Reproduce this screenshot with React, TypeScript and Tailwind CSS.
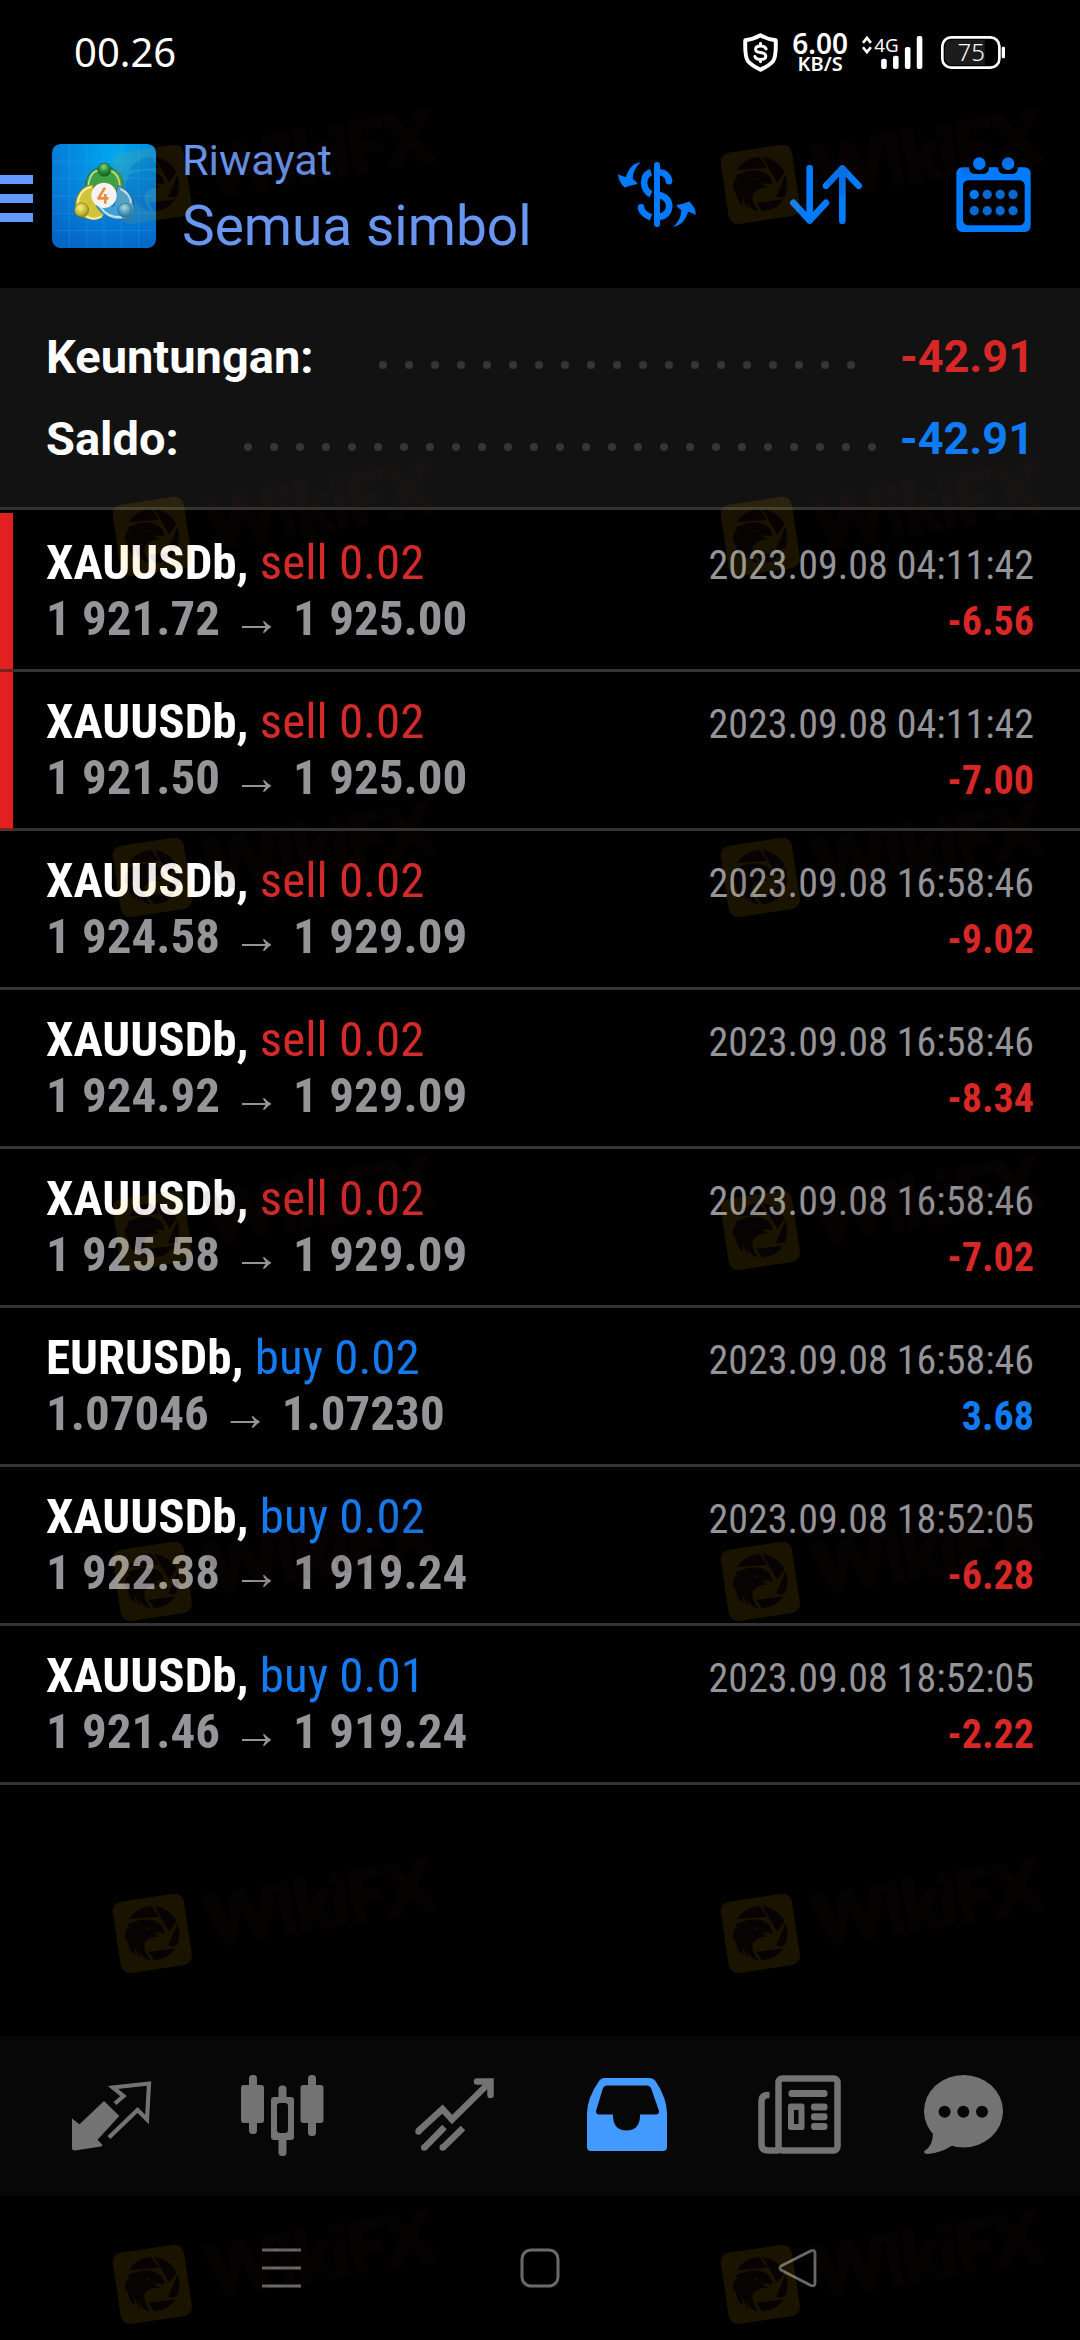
import type { ReactNode } from "react";

type Side = "sell" | "buy";

interface Deal {
  symbol: string;
  side: Side;
  volume: string;
  open: string;
  close: string;
  time: string;
  profit: string;
  marked?: boolean;
}

const deals: Deal[] = [
  { symbol: "XAUUSDb", side: "sell", volume: "0.02", open: "1 921.72", close: "1 925.00", time: "2023.09.08 04:11:42", profit: "-6.56", marked: true },
  { symbol: "XAUUSDb", side: "sell", volume: "0.02", open: "1 921.50", close: "1 925.00", time: "2023.09.08 04:11:42", profit: "-7.00", marked: true },
  { symbol: "XAUUSDb", side: "sell", volume: "0.02", open: "1 924.58", close: "1 929.09", time: "2023.09.08 16:58:46", profit: "-9.02" },
  { symbol: "XAUUSDb", side: "sell", volume: "0.02", open: "1 924.92", close: "1 929.09", time: "2023.09.08 16:58:46", profit: "-8.34" },
  { symbol: "XAUUSDb", side: "sell", volume: "0.02", open: "1 925.58", close: "1 929.09", time: "2023.09.08 16:58:46", profit: "-7.02" },
  { symbol: "EURUSDb", side: "buy", volume: "0.02", open: "1.07046", close: "1.07230", time: "2023.09.08 16:58:46", profit: "3.68" },
  { symbol: "XAUUSDb", side: "buy", volume: "0.02", open: "1 922.38", close: "1 919.24", time: "2023.09.08 18:52:05", profit: "-6.28" },
  { symbol: "XAUUSDb", side: "buy", volume: "0.01", open: "1 921.46", close: "1 919.24", time: "2023.09.08 18:52:05", profit: "-2.22" },
];

function StatusBar() {
  return (
    <div className="flex h-[104px] items-center justify-between pl-[74px] pr-[75px] text-white">
      <time className="font-['Noto_Sans','Open_Sans',sans-serif] text-[40px]">00.26</time>
      <div className="flex items-center gap-[14px] font-['Noto_Sans','Open_Sans',sans-serif]">
        <svg viewBox="424 38 106 118" className="h-[39px] w-[35px]" fill="none" stroke="currentColor" strokeLinejoin="round" strokeLinecap="round" aria-label="Proteksi pembayaran">
          <path strokeWidth="12" d="M477 45 Q500 58 523 60 Q525 108 515 123 Q506 135 477 149 Q448 135 439 123 Q429 108 431 60 Q454 58 477 45Z" />
          <path strokeWidth="9" d="M494 86Q490 77 477 77Q462 77 462 87Q462 95 477 97Q493 99 493 108Q493 118 477 118Q463 118 460 109M477 70V76M477 119V125" />
        </svg>
        <div className="flex flex-col items-center pt-1 font-semibold">
          <span className="text-[28px] leading-5">6.00</span>
          <span className="text-[20px] leading-[22px]">KB/S</span>
        </div>
        <svg viewBox="785 48 183 100" className="h-[33px] w-[61px] overflow-visible" fill="currentColor" aria-label="Sinyal 4G">
          <path d="M787 69L799 54L811 69M787 82L799 97L811 82" fill="none" stroke="currentColor" strokeWidth="8" />
          <text x="821" y="97" fontSize="57" fontFamily="Noto Sans, sans-serif">4G</text>
          <rect x="842" y="117" width="17" height="31" rx="6" />
          <rect x="878" y="108" width="17" height="40" rx="6" />
          <rect x="914" y="81" width="17" height="67" rx="6" />
          <rect x="950" y="48" width="17" height="100" rx="6" />
        </svg>
        <svg viewBox="1023 48 193 99" className="ml-1 h-[33px] w-16 overflow-visible" fill="currentColor" aria-label="Baterai 75 persen">
          <rect x="1027" y="52" width="172" height="91" rx="27" fill="none" stroke="currentColor" strokeWidth="8" />
          <path d="M1058 60H1155V135H1058Q1035 135 1035 112V83Q1035 60 1058 60Z" fill="#1c1c1c" />
          <text x="1073" y="123" fontSize="72" fontWeight="300" fontFamily="Noto Sans, sans-serif">75</text>
          <rect x="1206" y="80" width="10" height="35" rx="4" />
        </svg>
      </div>
    </div>
  );
}

function AppLogo() {
  return (
    <svg viewBox="21 28 312 312" className="size-[104px]" aria-label="MetaTrader 4">
      <defs>
        <radialGradient id="sky" cx="0.6" cy="0.1" r="1">
          <stop offset="0" stopColor="#00a8ee" />
          <stop offset="0.5" stopColor="#0583dc" />
          <stop offset="1" stopColor="#0464c4" />
        </radialGradient>
        <radialGradient id="green" cx="0.45" cy="0.3" r="0.7">
          <stop offset="0" stopColor="#8fd08a" />
          <stop offset="0.5" stopColor="#2c8f35" />
          <stop offset="1" stopColor="#12601c" />
        </radialGradient>
        <radialGradient id="yellow" cx="0.4" cy="0.35" r="0.7">
          <stop offset="0" stopColor="#f4ee90" />
          <stop offset="0.6" stopColor="#c9bb2e" />
          <stop offset="1" stopColor="#8b851f" />
        </radialGradient>
        <radialGradient id="blue" cx="0.45" cy="0.3" r="0.7">
          <stop offset="0" stopColor="#a4dcf8" />
          <stop offset="0.6" stopColor="#3b96cf" />
          <stop offset="1" stopColor="#156aa5" />
        </radialGradient>
      </defs>
      <rect x="21" y="28" width="312" height="312" rx="26" fill="url(#sky)" />
      <path d="M73 28V340M125 28V340M177 28V340M229 28V340M281 28V340M21 80H333M21 132H333M21 184H333M21 236H333M21 288H333" stroke="#5cc2f5" strokeOpacity="0.28" strokeWidth="2" />
      <path d="M126 190C112 140 130 98 178 97C228 98 246 142 226 192L196 190L160 188Z" fill="#3e9f45" stroke="#246c3a" strokeWidth="3" />
      <path d="M133 176C124 142 140 108 160 108M196 108C220 116 230 146 220 176" fill="none" stroke="#b5e3a5" strokeWidth="5" strokeLinecap="round" />
      <path d="M145 150C112 150 90 182 91 218C98 246 128 262 168 250L192 226L150 205Z" fill="#cfc43c" stroke="#7d7d2d" strokeWidth="3" />
      <path d="M136 158C112 164 100 184 99 202M126 246C142 256 158 252 168 246" fill="none" stroke="#f5f0a5" strokeWidth="6" strokeLinecap="round" />
      <path d="M218 152C250 160 272 200 266 232C252 260 206 264 178 240C162 228 154 216 152 206L206 214Z" fill="#439fd8" stroke="#1d6ba4" strokeWidth="3" />
      <path d="M228 164C246 172 256 188 258 202M166 216C180 240 202 248 228 248" fill="none" stroke="#bfe7fa" strokeWidth="6" strokeLinecap="round" />
      <circle cx="178" cy="105" r="20" fill="url(#green)" stroke="#1d6a2e" strokeWidth="2" />
      <circle cx="110" cy="226" r="21" fill="url(#yellow)" stroke="#7f7c2c" strokeWidth="2" />
      <circle cx="240" cy="227" r="21" fill="url(#blue)" stroke="#1a659c" strokeWidth="2" />
      <circle cx="177" cy="182" r="38" fill="#f4f3f1" />
      <path d="M180 159L160 191H190M181 178V207" fill="none" stroke="#ee8d3e" strokeWidth="8" strokeLinejoin="round" />
    </svg>
  );
}

function Header() {
  return (
    <header className="flex h-[184px] items-center pr-[49px] text-[#007aff]">
      <button type="button" aria-label="Menu" className="flex w-[33px] flex-col gap-[10px] pt-1">
        <span className="h-[9px] bg-[#6699ff]" />
        <span className="h-[9px] bg-[#6699ff]" />
        <span className="h-[9px] bg-[#6699ff]" />
      </button>
      <div className="ml-[19px]">
        <AppLogo />
      </div>
      <div className="ml-[26px] font-[Roboto,sans-serif] text-[#6896f0]">
        <p className="text-[43px] leading-[60px]">Riwayat</p>
        <h1 className="text-[55px] leading-[72px]">Semua simbol</h1>
      </div>
      <div className="ml-auto flex items-center gap-[94px] pb-[3px]">
        <button type="button" aria-label="Simbol">
          <svg viewBox="54 430 234 196" className="h-[65px] w-[78px]" fill="none" stroke="currentColor" strokeWidth="20">
            <path strokeLinecap="round" strokeWidth="18" d="M171 439V617" />
            <path d="M178 461Q204 463 208 488" />
            <circle cx="207" cy="488" r="10" fill="currentColor" stroke="none" />
            <path d="M153 461Q133 467 132 492Q133 517 153 527" />
            <path d="M178 529Q208 538 208 564Q206 590 178 596" />
            <path d="M122 567Q126 587 153 597" />
            <circle cx="123" cy="567" r="10" fill="currentColor" stroke="none" />
            <g fill="currentColor" stroke="none">
              <path d="M122 431Q90 434 77 476Q66 474 54 466Q54 490 74 507Q90 500 113 496Q108 486 98 481Q98 452 122 431Z" />
              <path d="M220 625Q252 622 265 580Q276 582 288 590Q288 566 268 549Q252 556 229 560Q234 570 244 575Q244 604 220 625Z" />
            </g>
          </svg>
        </button>
        <button type="button" aria-label="Urutkan">
          <svg viewBox="570 440 216 176" className="h-[59px] w-[72px]" fill="none" stroke="currentColor" strokeWidth="20" strokeLinecap="round" strokeLinejoin="round">
            <path d="M629 449V606M580 553L629 606L678 553M727 607V450M678 502L727 450L776 502" />
          </svg>
        </button>
        <button type="button" aria-label="Periode">
          <svg viewBox="1068 410 224 226" className="h-[75px] w-[75px]" fill="currentColor">
            <rect x="1068" y="441" width="224" height="195" rx="18" />
            <g fill="#000">
              <rect x="1107" y="400" width="59" height="61" rx="16" />
              <rect x="1194" y="400" width="59" height="61" rx="16" />
              <rect x="1088" y="480" width="186" height="136" rx="16" />
            </g>
            <circle cx="1137" cy="430" r="19" />
            <circle cx="1224" cy="430" r="19" />
            <circle cx="1122" cy="523" r="14" />
            <g fill="#0a68d2">
              <circle cx="1161" cy="523" r="14" />
              <circle cx="1200" cy="523" r="14" />
              <circle cx="1239" cy="523" r="14" />
              <circle cx="1122" cy="572" r="14" />
              <circle cx="1161" cy="572" r="14" />
              <circle cx="1200" cy="572" r="14" />
              <circle cx="1239" cy="572" r="14" />
            </g>
          </svg>
        </button>
      </div>
    </header>
  );
}

function SummaryRow({ label, value, tone }: { label: string; value: string; tone: string }) {
  return (
    <div className="flex items-center">
      <dt className="text-[47px] text-white">{label}</dt>
      <div aria-hidden="true" className="ml-14 mr-[13px] mt-4 flex h-[26px] flex-1 flex-wrap overflow-hidden">
        {Array.from({ length: 32 }, (_, i) => (
          <span key={i} className="flex size-[26px] items-center justify-center">
            <span className="size-2 rounded-full bg-[#353535]" />
          </span>
        ))}
      </div>
      <dd className={`text-[45px] ${tone}`}>{value}</dd>
    </div>
  );
}

function DealRow({ deal }: { deal: Deal }) {
  const sideTone = deal.side === "sell" ? "text-[#d42a2a]" : "text-[#157aee]";
  const profitTone = deal.profit.startsWith("-") ? "text-[#d82727]" : "text-[#0f7cf5]";
  return (
    <li className="relative border-b-[3px] border-[#333333] px-[46px] py-[22px] font-['Roboto_Condensed',Roboto,sans-serif]">
      {deal.marked && (
        <>
          <span className="absolute inset-y-0 left-0 w-[13px] bg-[#e22020]" />
          <span className="absolute -bottom-[3px] left-0 h-[3px] w-[13px] bg-[#6f2626]" />
        </>
      )}
      <div className="flex items-baseline justify-between">
        <p className="text-[49px] leading-[56px]">
          <b className="font-bold text-white">{deal.symbol},</b> <span className={sideTone}>{deal.side} {deal.volume}</span>
        </p>
        <time className="text-[40px] leading-none text-[#949499]">{deal.time}</time>
      </div>
      <div className="flex items-baseline justify-between font-bold">
        <p className="flex items-baseline gap-3 text-[49px] leading-[56px] text-[#949499]">
          <span>{deal.open}</span>
          <span className="font-['Liberation_Sans',sans-serif] font-normal leading-none">→</span>
          <span>{deal.close}</span>
        </p>
        <span className={`text-[40px] leading-none ${profitTone}`}>{deal.profit}</span>
      </div>
    </li>
  );
}

function Tab({ label, viewBox, active, children }: { label: string; viewBox: string; active?: boolean; children: ReactNode }) {
  return (
    <button type="button" aria-label={label} aria-current={active ? "page" : undefined} className={`flex flex-1 items-center justify-center ${active ? "text-[#429aff]" : "text-[#737373]"}`}>
      <svg viewBox={viewBox} className="size-24" fill="currentColor">
        {children}
      </svg>
    </button>
  );
}

function TabBar() {
  return (
    <nav className="flex h-40 bg-[#070707] px-6">
      <Tab label="Kuotasi" viewBox="62 38 96 96">
        <path d="M72 88.5L79.5 94.3L104 71L119.3 86L97.5 109.7L102.5 115L101 116.5L75 120.5Q72 120.5 72 118Z" />
        <path d="M115 73.5L123.5 66L113 57.5L149 53.5L147 89.5L137.5 80L109 107.5" fill="none" stroke="currentColor" strokeWidth="4.2" />
      </Tab>
      <Tab label="Grafik" viewBox="234 38 96 96">
        <rect x="241" y="55" width="23" height="38" rx="3" />
        <rect x="249" y="45" width="8" height="59" rx="3.5" />
        <rect x="300.5" y="55" width="23" height="38" rx="3" />
        <rect x="308" y="45" width="8" height="61" rx="3.5" />
        <rect x="278.5" y="55.5" width="8" height="17" rx="3.5" />
        <rect x="278.5" y="105" width="8" height="21" rx="3.5" />
        <path fillRule="evenodd" d="M274 67H291Q294 67 294 70V107Q294 110 291 110H274Q271 110 271 107V70Q271 67 274 67ZM280 73Q277 73 277 76V100Q277 103 280 103H285Q288 103 288 100V76Q288 73 285 73Z" />
      </Tab>
      <Tab label="Transaksi" viewBox="406 38 96 96">
        <g fill="none" stroke="currentColor" strokeWidth="6.5">
          <path d="M418 101.5L442.5 79L452 89.5L489 53" />
          <path d="M424 118L444.5 97M442.5 118L463 98" />
          <path strokeLinecap="round" d="M477 51.5H490.5V65" />
        </g>
        <circle cx="418.5" cy="101.5" r="3.2" />
        <circle cx="424.2" cy="117.5" r="3.2" />
        <circle cx="442.7" cy="117.5" r="3.2" />
      </Tab>
      <Tab label="Riwayat" viewBox="38 38 96 96" active>
        <path fillRule="evenodd" d="M64 48H110Q113 48 115.5 51Q127 68 127 84V117Q127 121 123 121H51Q47 121 47 117V84Q47 68 59 51Q61 48 64 48ZM67 55.5Q64 55.5 63 58L56 81Q56 84.5 59 84.5H73V87Q74 100.5 86.5 100.5Q99 100.5 100 87V84.5H116Q119 84.5 119 81L111 58Q110 55.5 107 55.5Z" />
      </Tab>
      <Tab label="Berita" viewBox="210 38 96 96">
        <g fill="none" stroke="currentColor" strokeWidth="6.5">
          <rect x="238.5" y="48.5" width="59" height="72" rx="4" />
          <path d="M229.5 65H228Q221.5 65 221.5 72V114Q221.5 120.5 228 120.5H239" />
        </g>
        <rect x="248.5" y="60" width="39" height="7" rx="3" />
        <path fillRule="evenodd" d="M251 73.5H262Q264.5 73.5 264.5 76V97.5Q264.5 100 262 100H251Q248 100 248 97.5V76Q248 73.5 251 73.5ZM254 80V94H258.5V80Z" />
        <rect x="271" y="73.5" width="16.5" height="7" rx="3" />
        <rect x="271" y="83.3" width="16.5" height="7" rx="3" />
        <rect x="271" y="93" width="16.5" height="7" rx="3" />
      </Tab>
      <Tab label="Pesan" viewBox="382 38 96 96">
        <ellipse cx="423.5" cy="81.2" rx="39.5" ry="36.2" />
        <path d="M393 103Q393 116 384 121.5Q384 124 388 124Q401 123 413 115Z" />
        <g fill="#070707">
          <circle cx="404.6" cy="81.7" r="6" />
          <circle cx="423.3" cy="81.7" r="6" />
          <circle cx="442" cy="81.7" r="6" />
        </g>
      </Tab>
    </nav>
  );
}

function SystemNav() {
  return (
    <div className="flex h-36 items-center justify-center gap-[218px] text-[#6a6a6a]">
      <button type="button" aria-label="Aplikasi terbaru">
        <svg viewBox="0 0 40 40" className="size-10" stroke="currentColor" strokeWidth="3">
          <path d="M0 2H39M0 20H39M0 38H39" />
        </svg>
      </button>
      <button type="button" aria-label="Beranda">
        <svg viewBox="0 0 40 40" className="size-10" fill="none" stroke="currentColor" strokeWidth="3">
          <rect x="2" y="2" width="36" height="36" rx="9" />
        </svg>
      </button>
      <button type="button" aria-label="Kembali">
        <svg viewBox="0 0 40 40" className="size-10" fill="none" stroke="currentColor" strokeWidth="2.8" strokeLinejoin="round">
          <path d="M3 18Q1 20 3 22L33 37.5Q37 39 37 35V5Q37 1.5 33 2.8Z" />
        </svg>
      </button>
    </div>
  );
}

// The eagle's head and the shutter blades around it.
const emblemPath =
  "M87 238Q106 202 155 198L177 230ZM163 198Q212 206 229 245L208 275ZM233 250Q244 290 230 318L204 319ZM146 336L226 325Q205 358 163 361ZM80 256Q112 236 152 239Q190 247 194 281Q176 274 160 278L181 290Q148 288 134 309Q128 330 150 360Q130 360 117 334L118 354L104 318L104 344Q88 334 82 300L76 298Q72 280 80 268L90 262Z";

function Watermark() {
  return (
    <svg viewBox="30 51 990 360" className="h-[120px] w-[330px] overflow-visible">
      <mask id="emblem" maskUnits="userSpaceOnUse" x="0" y="100" width="320" height="340">
        <rect x="0" y="100" width="320" height="340" fill="#fff" />
        <path d={emblemPath} fill="#000" />
        <path d="M132 260Q142 268 154 261Q144 274 132 260Z" fill="#fff" />
      </mask>
      <g mask="url(#emblem)">
        <rect x="49" y="172" width="216" height="216" rx="28" fill="#fabe00" fillOpacity="0.1" transform="rotate(-8.5 157 280)" />
      </g>
      <path d={emblemPath} fill="#461c18" opacity="0.1" />
      <text x="332" y="318" fontSize="206" fontWeight="700" fontFamily="Lato, sans-serif" fill="#461c18" stroke="#461c18" opacity="0.1" strokeWidth="12" strokeLinejoin="round" transform="rotate(-9.5 332 318)">
        WikiFX
      </text>
    </svg>
  );
}

const watermarkRows = ["top-[108px]", "top-[460px]", "top-[801px]", "top-[1154px]", "top-[1505px]", "top-[1857px]", "top-[2208px]"];

function Watermarks() {
  return (
    <div aria-hidden="true" className="pointer-events-none absolute inset-0 overflow-hidden">
      {watermarkRows.map((top) => (
        <div key={top} className={`absolute left-[110px] flex gap-[278px] ${top}`}>
          <Watermark />
          <Watermark />
        </div>
      ))}
    </div>
  );
}

export default function App() {
  return (
    <div className="relative flex min-h-screen flex-col bg-black">
      <StatusBar />
      <Header />
      <dl className="border-b-[3px] border-[#333333] bg-[#121212] px-[46px] pb-[27px] pt-7 font-[Roboto,sans-serif] font-bold leading-[82px]">
        <SummaryRow label="Keuntungan:" value="-42.91" tone="text-[#d82727]" />
        <SummaryRow label="Saldo:" value="-42.91" tone="text-[#0f7cf5]" />
      </dl>
      <main className="flex-1">
        <ul className="pt-[3px]">
          {deals.map((deal, i) => (
            <DealRow key={i} deal={deal} />
          ))}
        </ul>
      </main>
      <TabBar />
      <SystemNav />
      <Watermarks />
    </div>
  );
}
